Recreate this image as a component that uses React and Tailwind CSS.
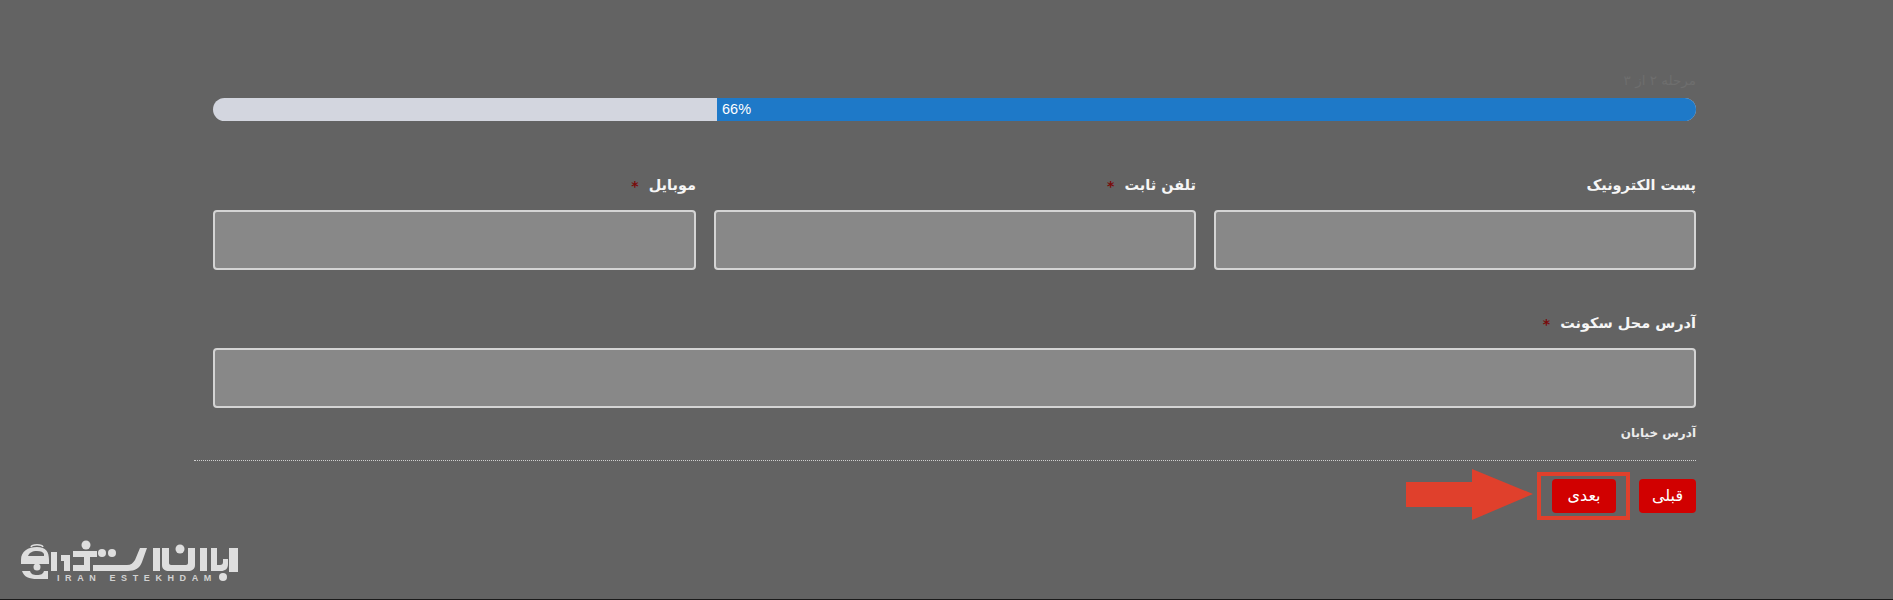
const FONT = "font-['DejaVu_Sans','Noto_Sans',sans-serif]";

function Field({ label, required, className = '' }) {
  return (
    <div className={className}>
      <label className="flex h-[24px] items-center gap-[10px] text-[14.5px] font-bold text-[#f6f6f6]">
        {label}
        {required && <span className="text-[14px] font-bold text-[#7a0a0a]">*</span>}
      </label>
      <div className="mt-[12px] h-[60px] rounded-[4px] border-2 border-[#d4d4d4] bg-[#888888]" />
    </div>
  );
}

function Logo() {
  return (
    <div dir="ltr" className="absolute top-[535px] left-[15px] h-[55px] w-[230px]">
      <svg width="230" height="55" viewBox="0 0 230 55" fill="#dedede">
        {/* bag */}
        <path d="M16 12c1-3 11-3 12 0" fill="none" stroke="#dedede" strokeWidth="1.5" />
        <path d="M6 25C6 16 13 12 22 12s12 5 12 13v4H6zM13 21h16v-2c-1-2-3-3-7-3-5 0-8 2-9 5z" fillRule="evenodd" />
        <path d="M7 36h8c1 3 3 4 7 4s6-1 7-4h4v8H22C14 44 9 42 7 36z" />
        <circle cx="22" cy="32" r="3.5" />
        {/* letters */}
        <path d="M36 17h6v19h-6z" />
        <path d="M46 20h9v16h-6v-10h-3z" />
        <circle cx="71" cy="10" r="4.5" />
        <path d="M58 16h24v6h-7v14H58v-6h11v-8H58z" />
        <circle cx="87" cy="18" r="4" />
        <circle cx="97" cy="18" r="4" />
        <path d="M78 30h34c4 0 6-2 8-5l5-12h7l-5 14c-2 6-7 9-14 9H78z" />
        <path d="M138 13h7v23h-7z" />
        <path d="M147 13h7v15c0 1 1 2 2 2h15c1 0 2-1 2-2V13h7v17c0 4-3 6-7 6h-19c-4 0-7-2-7-6z" />
        <circle cx="165" cy="14" r="4.5" />
        <path d="M185 13h7v23h-7zM196 13h6v17h3c2 0 3-1 3-3v-3h5v5c0 5-3 7-7 7h-10z" />
        <path d="M214 13h9v24h-9z" />
        <circle cx="208" cy="42" r="4" />
      </svg>
      <div className="absolute top-[38px] left-[42px] font-['Liberation_Sans',sans-serif] text-[9px] leading-[10px] font-bold tracking-[5.6px] whitespace-nowrap text-[#d2d2d2]">
        IRAN ESTEKHDAM
      </div>
    </div>
  );
}

export default function App() {
  return (
    <div dir="rtl" className={`relative h-[600px] overflow-hidden border-b border-b-[#1a1a1a] bg-[#636363] ${FONT}`}>
      <div className="pt-[71px] pr-[197px] pl-[194px]">
        <div className="pl-[19px]">
          <div className="h-[27px] text-[13.5px] leading-[18px] text-[#6e6e6e]">مرحله ۲ از ۳</div>
          <div className="flex h-[23px] overflow-hidden rounded-full bg-[#d3d6df]" dir="ltr">
            <div className="w-[504px]" />
            <div className="flex-1 bg-[#1e79c8] pl-[5px] font-['Liberation_Sans',sans-serif] text-[14.5px] leading-[23px] text-white">
              66%
            </div>
          </div>

          <div className="mt-[53px] grid grid-cols-[482px_482px_483px] gap-[18px]">
            <Field label="پست الکترونیک" />
            <Field label="تلفن ثابت" required />
            <Field label="موبایل" required />
          </div>

          <Field label="آدرس محل سکونت" required className="mt-[42px]" />
          <div className="mt-[16px] text-[12px] leading-[18px] font-bold text-[#ececec]">آدرس خیابان</div>
        </div>

        <div className="mt-[18px] border-t border-dotted border-t-[#d0d0d0] pt-[18px]">
          <div className="flex gap-[23px]">
            <button className="h-[34px] w-[57px] rounded-[4px] bg-[#d10000] text-[16px] text-white">قبلی</button>
            <div className="relative">
              <button className="h-[34px] w-[64px] rounded-[4px] bg-[#d10000] text-[16px] text-white">بعدی</button>
              <div className="absolute top-[-7px] right-[-14px] h-[48px] w-[93px] border-[4px] border-[#e0402c]" />
              <svg className="absolute top-[-10px] right-[83px]" width="127" height="51" viewBox="0 0 127 51" fill="#e0402c">
                <path d="M0 13h66V0l61 25-61 26V38H0z" />
              </svg>
            </div>
          </div>
        </div>
      </div>
      <Logo />
    </div>
  );
}
